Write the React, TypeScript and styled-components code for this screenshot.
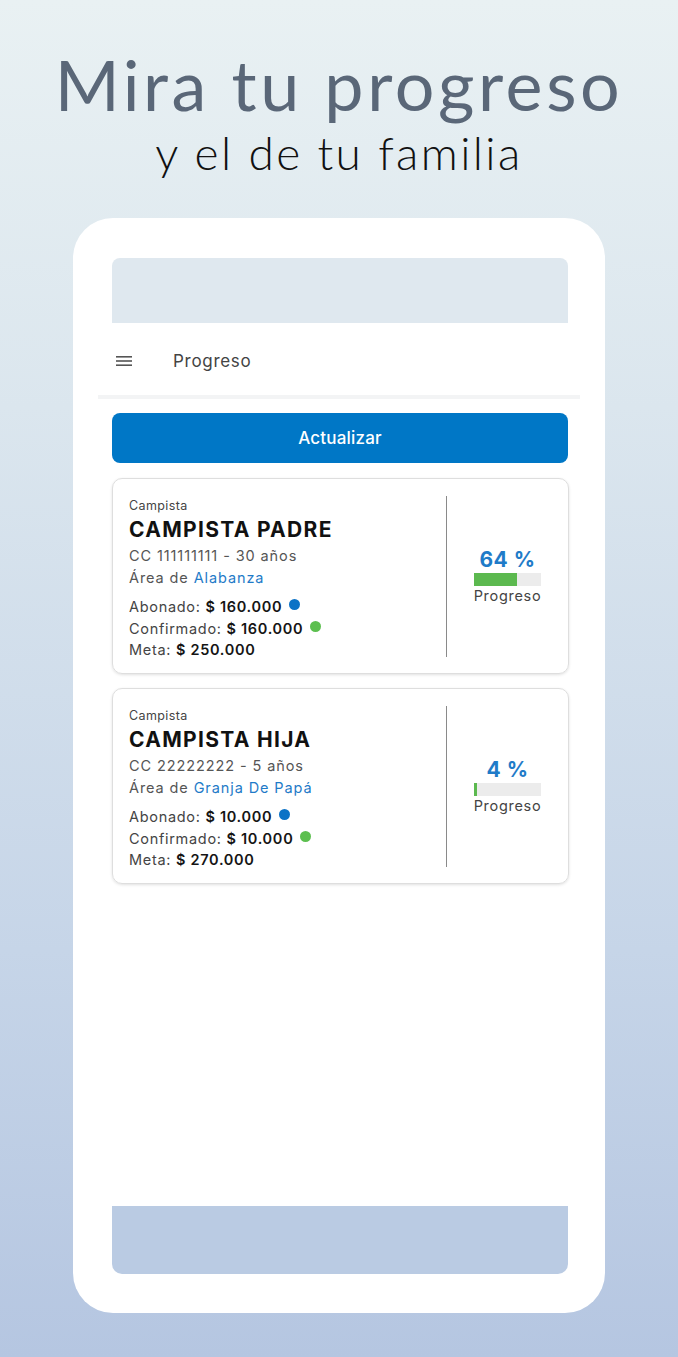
import React from "react";
import styled, { createGlobalStyle } from "styled-components";

const GlobalStyle = createGlobalStyle`
  html, body {
    margin: 0;
    padding: 0;
  }
  body {
    font-family: Inter, Roboto, "Liberation Sans", sans-serif;
  }
`;

const Page = styled.div`
  width: 678px;
  height: 1357px;
  box-sizing: border-box;
  background: linear-gradient(180deg, #e9f1f3 0%, #dbe6ee 30%, #c6d5e8 70%, #b5c6e1 100%);
  display: flex;
  flex-direction: column;
  align-items: center;
  padding-top: 44px;
  overflow: hidden;
`;

const Title = styled.h1`
  margin: 0;
  font-family: Lato, "Noto Sans", sans-serif;
  font-weight: 400;
  font-size: 70px;
  line-height: 80px;
  letter-spacing: 3.6px;
  color: #5a6778;
`;

const Subtitle = styled.h2`
  margin: 0;
  font-family: Lato, "Noto Sans", sans-serif;
  font-weight: 300;
  font-size: 46px;
  line-height: 58px;
  letter-spacing: 2.4px;
  color: #111;
`;

const Phone = styled.div`
  margin-top: 36px;
  width: 532px;
  height: 1095px;
  box-sizing: border-box;
  background: #fff;
  border-radius: 40px;
  padding: 40px 37px 39px 39px;
  display: flex;
  flex-direction: column;
`;

const StatusBar = styled.div`
  height: 65px;
  background: #dfe8ef;
  border-radius: 8px 8px 0 0;
`;

const NavBar = styled.div`
  height: 76px;
  box-sizing: border-box;
  padding-top: 4px;
  display: flex;
  align-items: center;
  gap: 41px;
  margin: 0 -12px 0 -14px;
  padding-left: 18px;
  border-bottom: 4px solid #f3f4f5;
`;

const NavTitle = styled.span`
  font-size: 17px;
  color: #444;
  letter-spacing: 0.7px;
`;

const Content = styled.div`
  flex: 1;
  display: flex;
  flex-direction: column;
  padding-top: 14px;
  gap: 14px;
`;

const RefreshButton = styled.button`
  height: 50px;
  width: 456px;
  border: none;
  border-radius: 8px;
  background: #0077c6;
  color: #fff;
  font-family: Inter, Roboto, "Liberation Sans", sans-serif;
  font-size: 17px;
  font-weight: 500;
  letter-spacing: 0.2px;
  margin-bottom: 1px;
`;

const Card = styled.div`
  width: 457px;
  height: 196px;
  box-sizing: border-box;
  border: 1.5px solid #dedede;
  border-radius: 10px;
  box-shadow: 0 1px 3px rgba(0, 0, 0, 0.12);
  display: flex;
  padding: 17px 0 16px 16px;
`;

const Info = styled.div`
  width: 317px;
  border-right: 1.5px solid #8a8a8a;
  display: flex;
  flex-direction: column;
  padding-top: 3px;
`;

const Label = styled.div`
  font-size: 12.5px;
  color: #444;
  line-height: 14px;
  letter-spacing: 0.4px;
`;

const Name = styled.div`
  margin-top: 2px;
  font-size: 21px;
  font-weight: 700;
  color: #111;
  line-height: 30px;
  letter-spacing: 1.3px;
`;

const Line = styled.div`
  font-size: 14.5px;
  color: #555;
  line-height: 21.5px;
  letter-spacing: 0.9px;
  &:first-of-type {
    margin-top: 1px;
  }
`;

const Highlight = styled.span`
  color: #1f7bc8;
`;

const Amounts = styled.div`
  margin-top: 8px;
`;

const AmountLine = styled.div`
  font-size: 14.5px;
  color: #444;
  line-height: 21.5px;
  letter-spacing: 0.7px;
  display: flex;
  align-items: center;
  gap: 4px;
`;

const Value = styled.b`
  color: #151515;
  font-weight: 600;
`;

const Dot = styled.span<{ $color: string }>`
  width: 11px;
  height: 11px;
  border-radius: 50%;
  background: ${(p) => p.$color};
  margin-left: 3px;
  margin-top: -4px;
`;

const Progress = styled.div`
  flex: 1;
  display: flex;
  flex-direction: column;
  align-items: center;
  justify-content: center;
  padding-top: 1px;
`;

const Percent = styled.div`
  font-size: 21px;
  font-weight: 700;
  color: #1f7bc8;
  line-height: 24px;
  letter-spacing: 0.5px;
`;

const Track = styled.div`
  width: 67px;
  height: 13px;
  background: #ececec;
  margin-top: 1px;
`;

const Fill = styled.div`
  height: 100%;
  background: #5cb94f;
`;

const ProgressLabel = styled.div`
  font-size: 14.5px;
  color: #444;
  line-height: 20px;
  letter-spacing: 0.7px;
`;

const BottomBar = styled.div`
  height: 68px;
  background: #bacbe3;
  border-radius: 0 0 10px 10px;
`;

const MenuIcon = () => (
  <svg width="16" height="12" viewBox="0 0 16 12">
    <rect x="0" y="1" width="16" height="1.6" fill="#555" />
    <rect x="0" y="5.2" width="16" height="1.6" fill="#555" />
    <rect x="0" y="9.4" width="16" height="1.6" fill="#555" />
  </svg>
);

type Camper = {
  name: string;
  doc: string;
  age: string;
  area: string;
  paid: string;
  confirmed: string;
  goal: string;
  percent: number;
};

const campers: Camper[] = [
  {
    name: "CAMPISTA PADRE",
    doc: "111111111",
    age: "30 años",
    area: "Alabanza",
    paid: "$ 160.000",
    confirmed: "$ 160.000",
    goal: "$ 250.000",
    percent: 64,
  },
  {
    name: "CAMPISTA HIJA",
    doc: "22222222",
    age: "5 años",
    area: "Granja De Papá",
    paid: "$ 10.000",
    confirmed: "$ 10.000",
    goal: "$ 270.000",
    percent: 4,
  },
];

const CamperCard = ({ camper }: { camper: Camper }) => (
  <Card>
    <Info>
      <Label>Campista</Label>
      <Name>{camper.name}</Name>
      <Line>
        CC {camper.doc} - {camper.age}
      </Line>
      <Line>
        Área de <Highlight>{camper.area}</Highlight>
      </Line>
      <Amounts>
        <AmountLine>
          <span>
            Abonado: <Value>{camper.paid}</Value>
          </span>
          <Dot $color="#0b72c6" />
        </AmountLine>
        <AmountLine>
          <span>
            Confirmado: <Value>{camper.confirmed}</Value>
          </span>
          <Dot $color="#5cbf4f" />
        </AmountLine>
        <AmountLine>
          <span>
            Meta: <Value>{camper.goal}</Value>
          </span>
        </AmountLine>
      </Amounts>
    </Info>
    <Progress>
      <Percent>{camper.percent} %</Percent>
      <Track>
        <Fill style={{ width: `${camper.percent}%` }} />
      </Track>
      <ProgressLabel>Progreso</ProgressLabel>
    </Progress>
  </Card>
);

export default function App() {
  return (
    <Page>
      <GlobalStyle />
      <Title>Mira tu progreso</Title>
      <Subtitle>y el de tu familia</Subtitle>
      <Phone>
        <StatusBar />
        <NavBar>
          <MenuIcon />
          <NavTitle>Progreso</NavTitle>
        </NavBar>
        <Content>
          <RefreshButton type="button">Actualizar</RefreshButton>
          {campers.map((c) => (
            <CamperCard key={c.name} camper={c} />
          ))}
        </Content>
        <BottomBar />
      </Phone>
    </Page>
  );
}
